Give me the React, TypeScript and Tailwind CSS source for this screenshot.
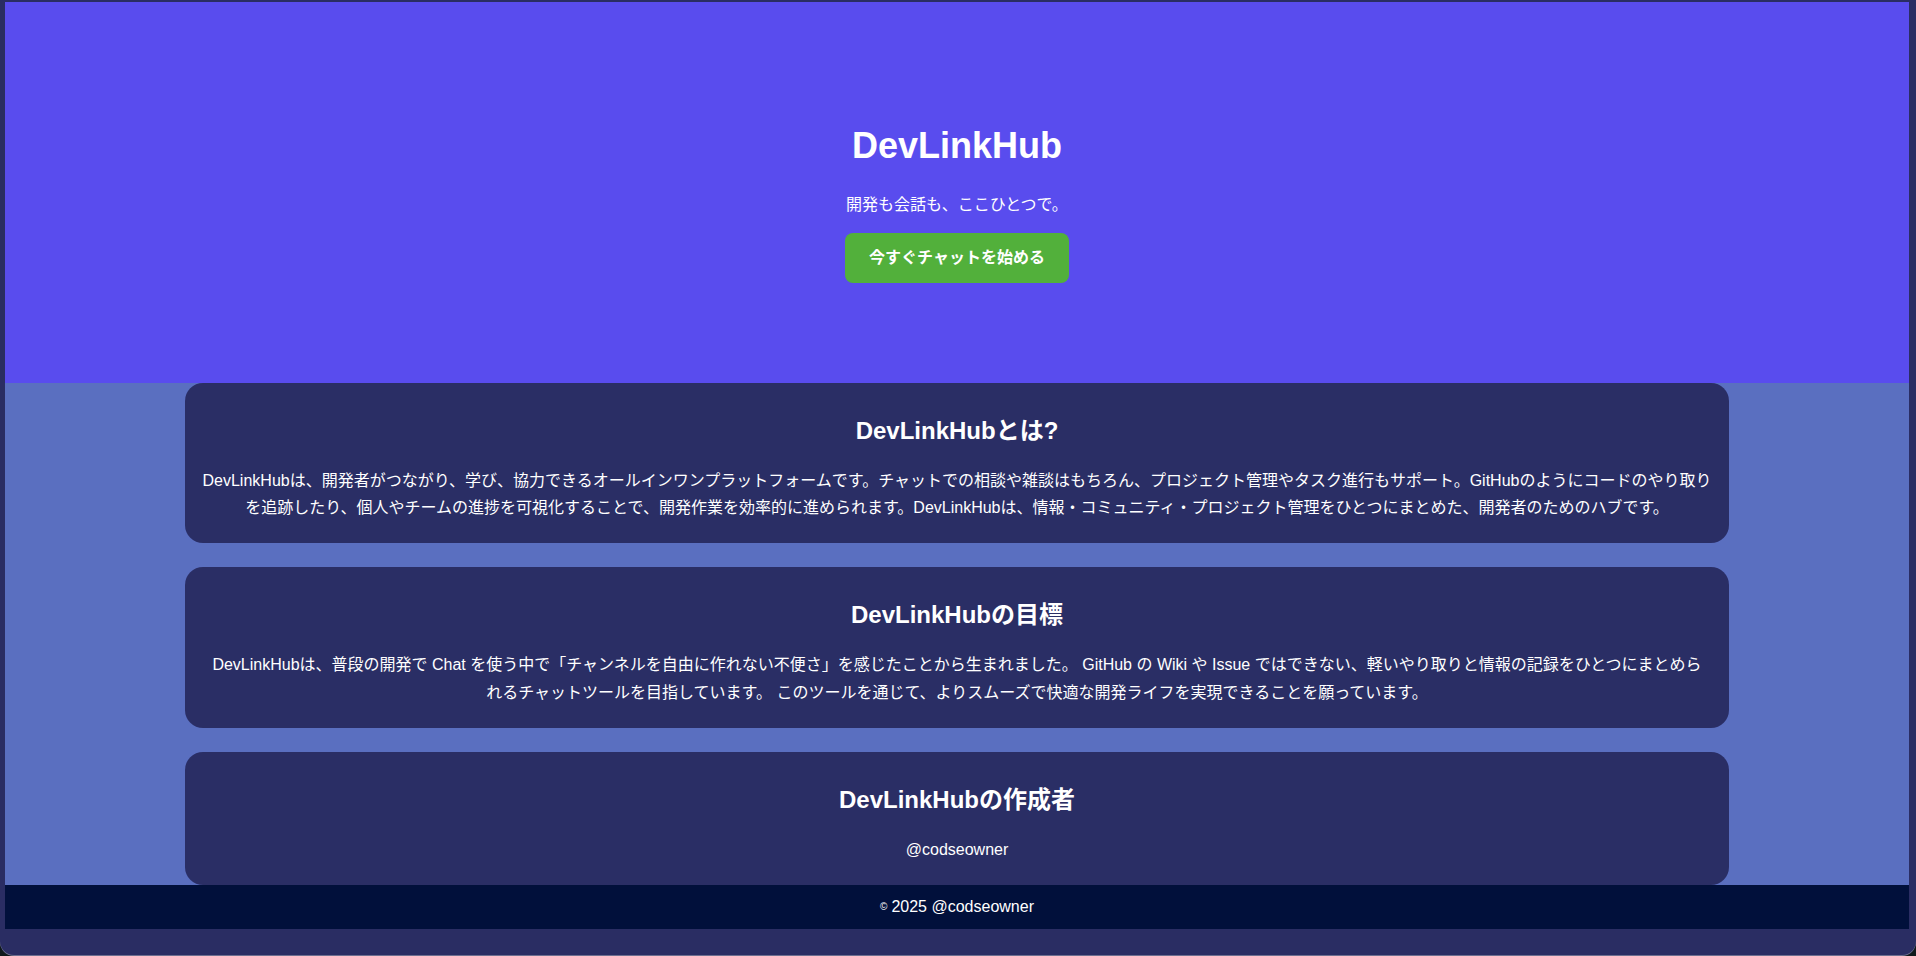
const FONT = 'font-["Liberation_Sans","Noto_Sans_CJK_JP",sans-serif]'

const SECTIONS = [
  {
    title: 'DevLinkHubとは?',
    body: 'DevLinkHubは、開発者がつながり、学び、協力できるオールインワンプラットフォームです。チャットでの相談や雑談はもちろん、プロジェクト管理やタスク進行もサポート。GitHubのようにコードのやり取りを追跡したり、個人やチームの進捗を可視化することで、開発作業を効率的に進められます。DevLinkHubは、情報・コミュニティ・プロジェクト管理をひとつにまとめた、開発者のためのハブです。',
  },
  {
    title: 'DevLinkHubの目標',
    body: 'DevLinkHubは、普段の開発で Chat を使う中で「チャンネルを自由に作れない不便さ」を感じたことから生まれました。 GitHub の Wiki や Issue ではできない、軽いやり取りと情報の記録をひとつにまとめら\nれるチャットツールを目指しています。 このツールを通じて、よりスムーズで快適な開発ライフを実現できることを願っています。',
  },
  {
    title: 'DevLinkHubの作成者',
    body: '@codseowner',
  },
]

function Hero() {
  return (
    <section className="h-[381px] bg-[#594cee] flex flex-col items-center pt-[124px] text-white">
      <h1 className="text-[36px] leading-10 font-bold">DevLinkHub</h1>
      <p className="mt-[27px] text-base leading-6">開発も会話も、ここひとつで。</p>
      <button className="mt-4 h-[50px] px-6 rounded-lg bg-[#52b03b] text-base font-bold text-white">
        今すぐチャットを始める
      </button>
    </section>
  )
}

function Card({ title, body }: { title: string; body: string }) {
  return (
    <div className="w-[1544px] mx-auto rounded-[18px] bg-[#2a2e65] px-3 pt-8 pb-[22px] text-center text-white">
      <h2 className="text-2xl leading-8 font-bold">{title}</h2>
      <p className="mt-5 text-base leading-[1.7] whitespace-pre-line">{body}</p>
    </div>
  )
}

export default function App() {
  return (
    <div className={`h-[956px] overflow-hidden bg-[#0f191c] ${FONT}`}>
      <div className="h-[955px] rounded-b-[14px] bg-[#2a2d63] pl-[5px] pr-[7px] pt-[2px] shadow-[0_1px_0_#6d7090]">
        <Hero />
        <main className="bg-[#5a6fc0] flex flex-col gap-6">
          {SECTIONS.map((s) => (
            <Card key={s.title} title={s.title} body={s.body} />
          ))}
        </main>
        <footer className="h-[44px] bg-[#01103b] flex items-center justify-center text-white text-base">
          <span className="text-[10px] mr-1">©</span>
          <span>2025 @codseowner</span>
        </footer>
      </div>
    </div>
  )
}
